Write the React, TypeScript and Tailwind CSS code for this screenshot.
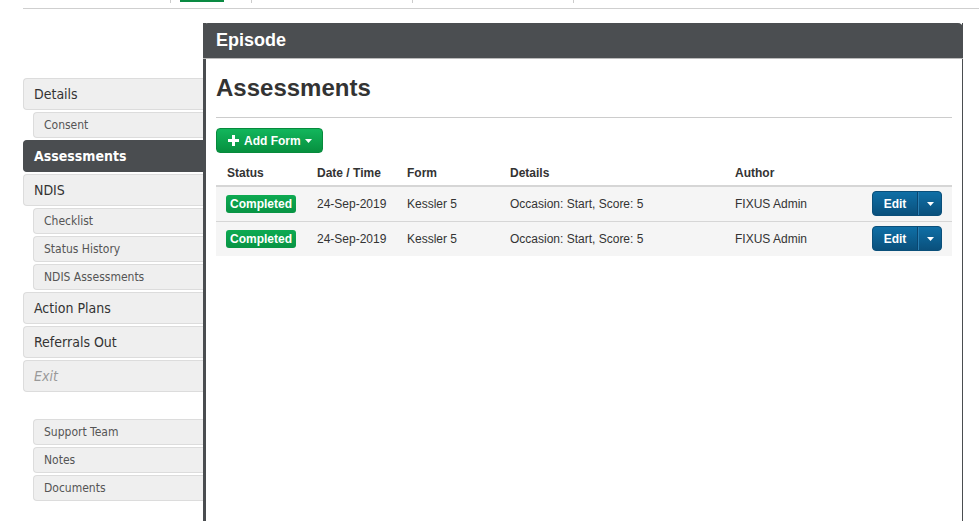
import React from "react";

void React;

const sans = "font-['Liberation_Sans',Arial,sans-serif]";
const side = "font-['DejaVu_Sans_Condensed','DejaVu_Sans',sans-serif]";

type NavItem = { label: string; sub?: boolean; active?: boolean; muted?: boolean; gapBefore?: boolean };

const nav: NavItem[] = [
  { label: "Details" },
  { label: "Consent", sub: true },
  { label: "Assessments", active: true },
  { label: "NDIS" },
  { label: "Checklist", sub: true },
  { label: "Status History", sub: true },
  { label: "NDIS Assessments", sub: true },
  { label: "Action Plans" },
  { label: "Referrals Out" },
  { label: "Exit", muted: true },
  { label: "Support Team", sub: true, gapBefore: true },
  { label: "Notes", sub: true },
  { label: "Documents", sub: true },
];

const rows = [
  { status: "Completed", date: "24-Sep-2019", form: "Kessler 5", details: "Occasion: Start, Score: 5", author: "FIXUS Admin" },
  { status: "Completed", date: "24-Sep-2019", form: "Kessler 5", details: "Occasion: Start, Score: 5", author: "FIXUS Admin" },
];

function Caret({ className = "" }: { className?: string }) {
  return (
    <svg width="7" height="4" viewBox="0 0 7 4" className={className} aria-hidden="true">
      <path d="M0 0h7L3.5 4z" fill="currentColor" />
    </svg>
  );
}

function SideNav() {
  return (
    <nav className={`mt-[55px] flex w-[180px] shrink-0 flex-col gap-[2px] ${side}`}>
      {nav.map((item) => {
        const base = item.sub
          ? "ml-[10px] h-[26px] text-[12px] text-[#555]"
          : "h-[32px] text-[14px] text-[#333]";
        const tone = item.active
          ? "bg-[#4a4d50] border-[#4a4d50] text-white font-bold"
          : "bg-[#efefef] border-[#dcdcdc]";
        return (
          <div
            key={item.label}
            className={`flex items-center rounded-l-[4px] border border-r-0 pl-[10px] ${base} ${tone} ${
              item.muted ? "italic text-[#999]" : ""
            } ${item.gapBefore ? "mt-[25px]" : ""}`}
          >
            {item.label}
          </div>
        );
      })}
    </nav>
  );
}

function AddFormButton() {
  return (
    <button className="flex h-[25px] w-[107px] items-center gap-[5px] rounded-[4px] border border-[#078a3c] bg-[linear-gradient(#12b65c,#07903f)] pl-[11px] text-[12px] font-bold text-white">
      <svg width="11" height="11" viewBox="0 0 11 11" aria-hidden="true">
        <path d="M4 0h3v4h4v3H7v4H4V7H0V4h4z" fill="currentColor" />
      </svg>
      <span>Add Form</span>
      <Caret className="ml-[-1px]" />
    </button>
  );
}

function EditButton() {
  return (
    <div className="ml-auto flex h-[25px] w-[70px] overflow-hidden rounded-[4px] border border-[#0a4f7a] bg-[linear-gradient(#0f6fa6,#0a507c)] text-white">
      <span className="flex w-[45px] items-center justify-center border-r border-[#0a4670] text-[12px] font-bold">Edit</span>
      <span className="flex flex-1 items-center justify-center border-l border-[#2a7fb3]">
        <Caret />
      </span>
    </div>
  );
}

function Panel() {
  return (
    <section className={`flex h-[510px] w-[760px] flex-col border-l-[3px] border-r border-[#4a4d50] ${sans}`}>
      <header className="-ml-[3px] -mr-px flex h-[36px] items-center rounded-t-[5px] border-b border-[#bbb] bg-[#4b4e51] pl-[13px] text-[18px] font-bold text-white">
        Episode
      </header>
      <div className="px-[10px] text-[#333]">
        <h1 className="mt-[16px] text-[24px] font-bold leading-[26px]">Assessments</h1>
        <div className="mt-[16px] border-t border-[#ccc]" />
        <div className="mt-[10px]">
          <AddFormButton />
        </div>
        <table className="mt-[7px] w-full border-collapse text-left text-[12px]">
          <thead>
            <tr className="h-[26px] border-b-2 border-[#d6d6d6] font-bold">
              <th className="w-[91px] pl-[11px]">Status</th>
              <th className="w-[90px] pl-[10px]">Date / Time</th>
              <th className="w-[103px] pl-[10px]">Form</th>
              <th className="w-[225px] pl-[10px]">Details</th>
              <th className="w-[137px] pl-[10px]">Author</th>
              <th />
            </tr>
          </thead>
          <tbody>
            {rows.map((r, i) => (
              <tr key={i} className="h-[35px] border-b border-[#d6d6d6] bg-[#f5f5f5] last:border-b-0">
                <td className="pl-[10px]">
                  <span className="inline-flex h-[18px] items-center rounded-[3px] bg-[linear-gradient(#0eaa52,#089444)] px-[4px] font-bold text-white">
                    {r.status}
                  </span>
                </td>
                <td className="pl-[10px]">{r.date}</td>
                <td className="pl-[10px]">{r.form}</td>
                <td className="pl-[10px]">{r.details}</td>
                <td className="pl-[10px]">{r.author}</td>
                <td className="pr-[10px]">
                  <EditButton />
                </td>
              </tr>
            ))}
          </tbody>
        </table>
      </div>
    </section>
  );
}

export default function App() {
  return (
    <div className="h-[521px] w-[979px] overflow-hidden bg-white">
      <div className="ml-[23px] flex h-[9px] border-b border-[#cfcfcf]">
        <div className="w-[147px]" />
        <div className="flex h-[3px] w-[81px] border-l border-[#ccc] pl-[9px]">
          <div className="h-[2px] w-[44px] bg-[#0a8a42]" />
        </div>
        <div className="h-[3px] w-[161px] border-l border-[#ccc]" />
        <div className="h-[3px] w-[161px] border-l border-[#ccc]" />
        <div className="h-[3px] w-[10px] border-l border-[#ccc]" />
      </div>
      <div className="flex items-start pl-[23px] pt-[14px]">
        <SideNav />
        <Panel />
      </div>
    </div>
  );
}
